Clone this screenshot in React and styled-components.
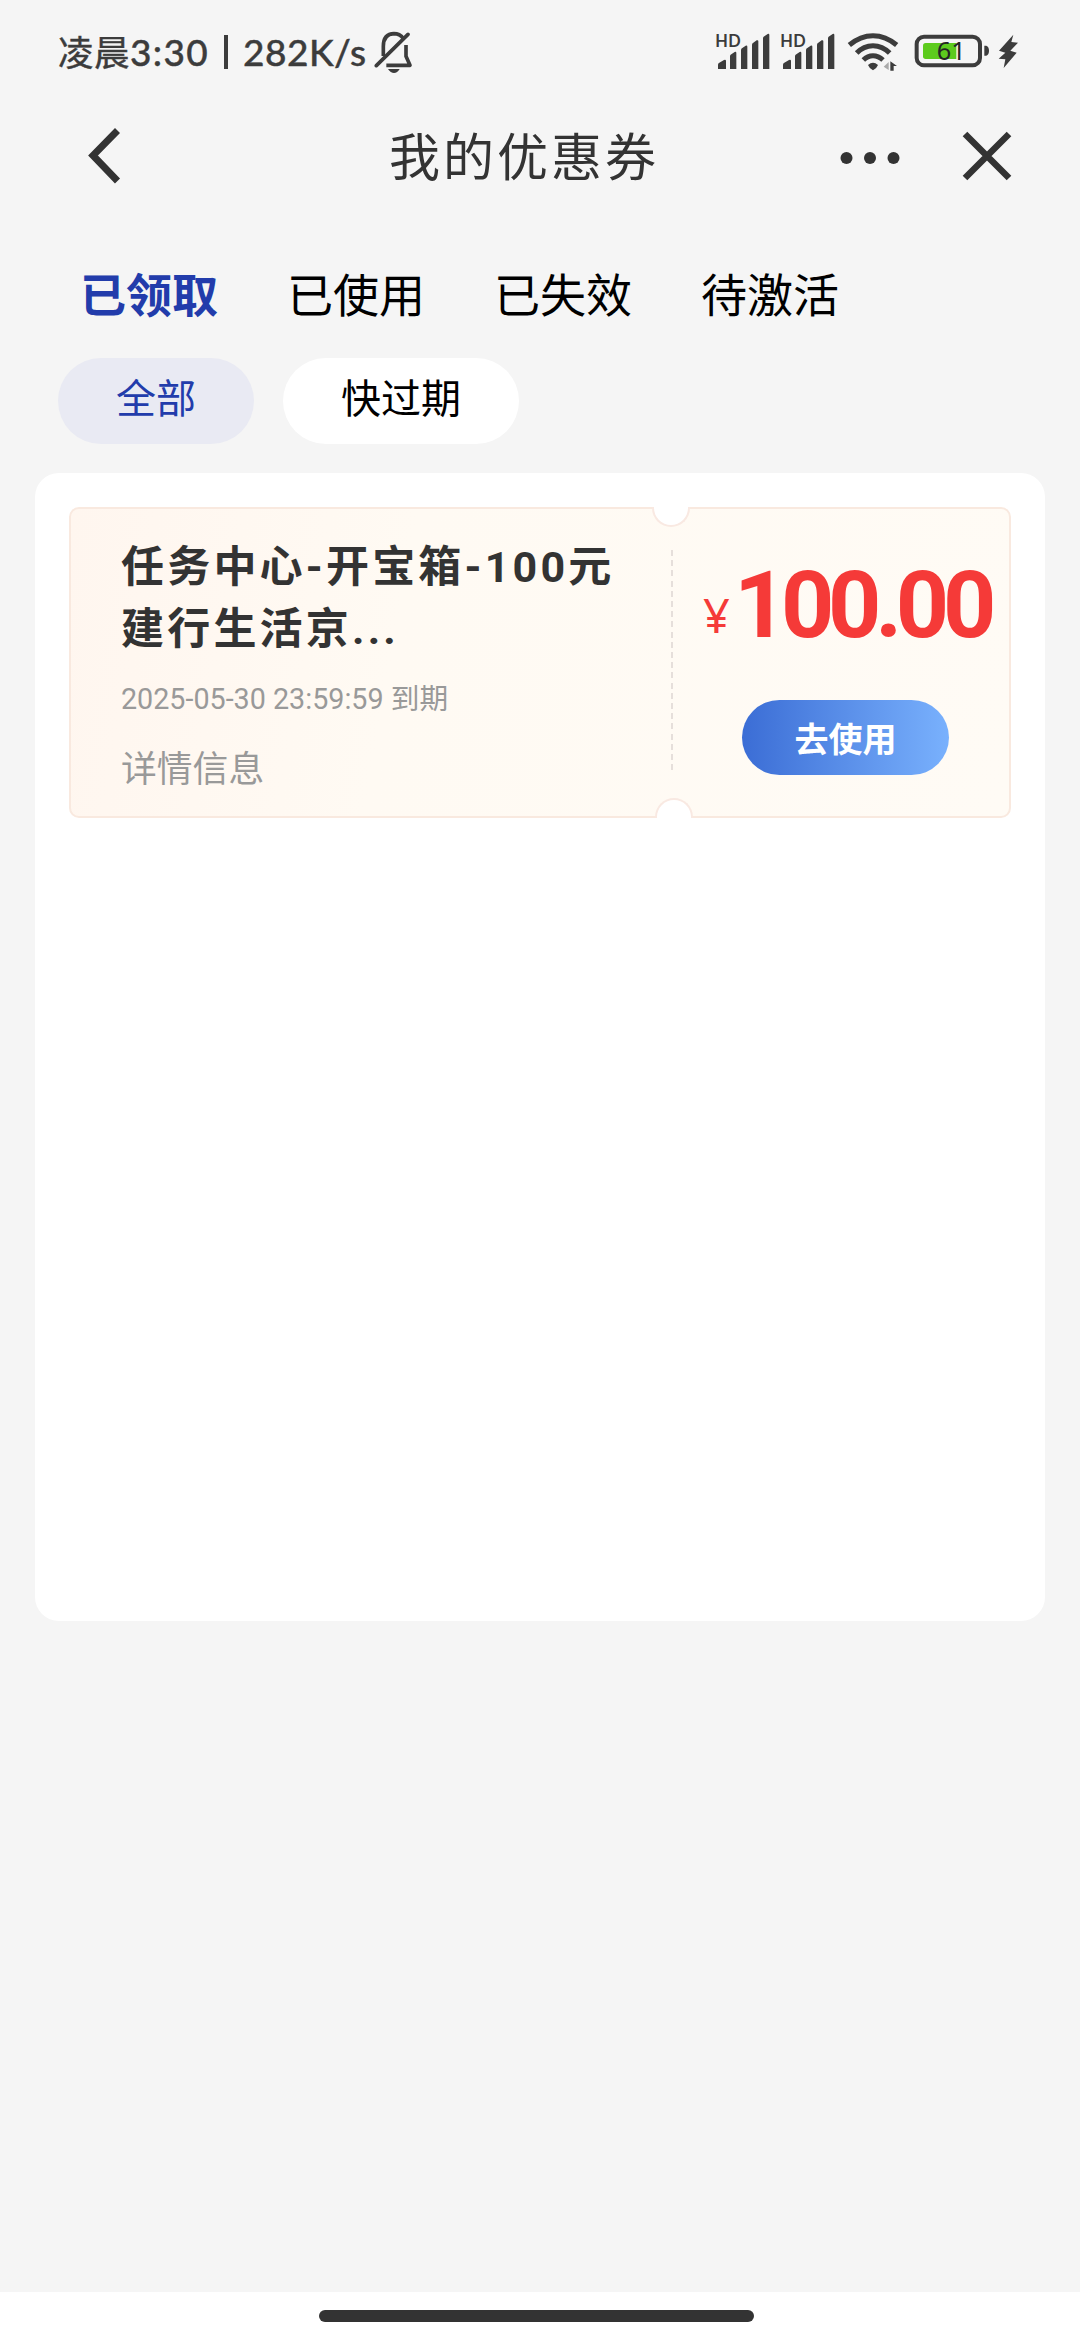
import React from "react";
import styled, { createGlobalStyle } from "styled-components";

const GlobalStyle = createGlobalStyle`
  * {
    box-sizing: border-box;
  }
  body {
    margin: 0;
    background: #f5f5f5;
    font-family: Roboto, "Noto Sans CJK SC", sans-serif;
  }
`;

const Page = styled.div`
  display: flex;
  flex-direction: column;
  width: 1080px;
  height: 2340px;
  background: #f5f5f5;
  overflow: hidden;
`;

// Status bar
const StatusBar = styled.div`
  display: flex;
  justify-content: space-between;
  height: 100px;
  padding: 0 62px 0 58px;
`;

const StatusLeft = styled.div`
  display: flex;
  height: 104px;
  color: #3c3c3c;
  font-family: Lato, "Noto Sans CJK SC", sans-serif;
  font-size: 37px;
  font-weight: 500;
  line-height: 103px;
  white-space: pre;
`;

const ClockPeriod = styled.span`
  font-size: 35.5px;
  font-weight: 400;
  letter-spacing: 0.5px;
  -webkit-text-stroke: 0.4px #3c3c3c;
`;

const ClockText = styled.span`
  width: 152px;
  letter-spacing: 1.3px;
  -webkit-text-stroke: 0.4px #3c3c3c;
`;

const Divider = styled.span`
  width: 4px;
  height: 34px;
  margin: 35px 15px 0 14px;
  background: #3c3c3c;
`;

const SpeedText = styled.span`
  width: 131px;
  letter-spacing: 0.5px;
  -webkit-text-stroke: 0.4px #3c3c3c;
`;

const BellIcon = styled.svg`
  margin-top: 31px;
`;

const StatusRight = styled.div`
  display: flex;
  padding-top: 31px;
`;

const StatusIcon = styled.svg`
  margin-right: ${(props) => props.$gap || 0}px;
  overflow: visible;
`;

// Title bar
const NavBar = styled.div`
  display: flex;
  align-items: center;
  height: 112px;
  padding: 0 66px 0 85px;
`;

const NavTitle = styled.h1`
  margin: 0 0 0 264px;
  padding-top: 5px;
  width: 450px;
  color: #333;
  font-size: 51px;
  font-weight: 400;
  letter-spacing: 3px;
  line-height: 107px;
`;

const NavIcon = styled.svg`
  flex: none;
  margin-left: ${(props) => props.$left || 0}px;
`;

// Tabs and filters
const Tabs = styled.div`
  display: flex;
  gap: 69px;
  height: 146px;
  padding: 50px 0 0 80px;
`;

const Tab = styled.span`
  color: ${(props) => (props.$active ? "#223cab" : "#000")};
  font-size: 46px;
  font-weight: ${(props) => (props.$active ? 700 : 400)};
  line-height: 68px;
`;

const Filters = styled.div`
  display: flex;
  gap: 29px;
  padding-left: 58px;
`;

const Filter = styled.span`
  height: 86px;
  padding: 0 58px;
  border-radius: 43px;
  background: ${(props) => (props.$active ? "#e9eaf3" : "#fff")};
  color: ${(props) => (props.$active ? "#223cab" : "#000")};
  font-size: 40px;
  line-height: 84px;
`;

// Coupon list
const Panel = styled.div`
  height: 1148px;
  margin: 29px 35px 0;
  padding: 34px 34px 0;
  border-radius: 24px;
  background: #fff;
`;

const Coupon = styled.div`
  position: relative;
  display: flex;
  height: 311px;
  border: 2px solid #f9e9df;
  border-radius: 10px;
  background: linear-gradient(100deg, #fff6ef 0%, #fffaf3 35%, #fffbf5 100%);
`;

const Notch = styled.i`
  position: absolute;
  left: ${(props) => (props.$bottom ? 584 : 581)}px;
  ${(props) => (props.$bottom ? "bottom: -2px;" : "top: -2px;")}
  width: 38px;
  height: 20px;
  border: 2px solid #f9e9e2;
  ${(props) => (props.$bottom ? "border-bottom: 0;" : "border-top: 0;")}
  border-radius: ${(props) => (props.$bottom ? "19px 19px 0 0" : "0 0 19px 19px")};
  background: #fff;
`;

const CouponInfo = styled.div`
  width: 600px;
  padding: 27px 0 0 50px;
`;

const CouponTitle = styled.div`
  color: #333;
  font-size: 43px;
  font-weight: 700;
  letter-spacing: 3.2px;
  line-height: 62px;
  white-space: nowrap;
`;

const Expire = styled.div`
  margin-top: 15px;
  color: #999;
  font-size: 28.7px;
  line-height: 48px;
`;

const Detail = styled.div`
  margin-top: 19px;
  color: #999;
  font-size: 35.8px;
  line-height: 56px;
`;

const Perforation = styled.div`
  width: 2px;
  height: 220px;
  margin-top: 41px;
  background: repeating-linear-gradient(#e6dfdb 0 6px, transparent 6px 10.2px);
`;

const CouponAction = styled.div`
  display: flex;
  flex-direction: column;
  padding: 47px 0 0 30px;
`;

const Price = styled.div`
  display: flex;
  align-items: baseline;
  height: 100px;
  color: #f53a38;
  line-height: 100px;
`;

const Currency = styled.span`
  position: relative;
  top: -4px;
  width: 31px;
  font-family: "Noto Sans", sans-serif;
  font-size: 47px;
`;

const Amount = styled.span`
  font-size: 93px;
  font-weight: 700;
  letter-spacing: -6.3px;
`;

const UseButton = styled.button`
  width: 207px;
  height: 75px;
  margin: 44px 0 0 39px;
  padding: 0 0 1px;
  border: 0;
  border-radius: 38px;
  background: linear-gradient(90deg, #3b6dd5, #79b1fd);
  color: #fff;
  font: 700 34px "Noto Sans CJK SC", sans-serif;
`;

// System navigation
const HomeArea = styled.div`
  height: 48px;
  margin-top: auto;
  padding: 18px 0 0 319px;
  background: #fff;
`;

const HomeIndicator = styled.div`
  width: 435px;
  height: 12px;
  border-radius: 6px;
  background: #333;
`;

const tabs = ["已领取", "已使用", "已失效", "待激活"];
const filters = ["全部", "快过期"];

const SignalIcon = ({ gap }) => (
  <StatusIcon $gap={gap} width="54" height="38" viewBox="0 0 162 114" fill="#3c3c3c">
    <text x="-2" y="47" fontFamily="Lato, sans-serif" fontWeight="700" fontSize="49" textLength="76">
      HD
    </text>
    <path d="M6 101q0-4 4-6l14-8q6-2 6 3v24H6z" />
    <path d="M42 76q0-4 4-6l10-7q5-2 5 3v48H42z" />
    <path d="M75 57q0-4 4-6l10-7q5-2 5 3v67H75z" />
    <path d="M108 41q0-4 4-6l10-7q5-2 5 3v83h-19z" />
    <path d="M141 22q0-4 4-6l10-7q5-2 5 3v102h-19z" />
  </StatusIcon>
);

const App = () => {
  return (
    <>
      <GlobalStyle />
      <Page>
        <StatusBar>
          <StatusLeft>
            <ClockText>
              <ClockPeriod>凌晨</ClockPeriod>
              3:30
            </ClockText>
            <Divider />
            <SpeedText>282K/s</SpeedText>
            <BellIcon width="40" height="44" viewBox="0 0 120 132" fill="none" stroke="#3c3c3c">
              <path
                d="M28 75V46Q28 9 60 8Q77 8 88 22M96 42V76L108 103H37"
                strokeWidth="11"
                strokeLinejoin="round"
              />
              <path d="M7 104L102 10" strokeWidth="11" strokeLinecap="round" />
              <path d="M42 114h35q-7 12-17 12t-18-12z" fill="#3c3c3c" stroke="none" />
            </BellIcon>
          </StatusLeft>
          <StatusRight>
            <SignalIcon gap={11} />
            <SignalIcon gap={13} />
            <StatusIcon $gap={17} width="50" height="42" viewBox="0 0 150 126">
              <g fill="none" stroke="#3c3c3c" strokeWidth="15">
                <path d="M4 42Q37 14 75 14T146 42" />
                <path d="M26 66Q47 44 75 44T125 66" />
                <path d="M46 87Q59 74 75 74T105 87" />
              </g>
              <path d="M60 102Q75 89 90 102Q87 111 75 118Q63 111 60 102z" fill="#3c3c3c" />
              <path d="M107 107l15-14v24z" fill="#aaa" />
              <path d="M127 119V91l20 14h-10v14z" fill="#3c3c3c" />
            </StatusIcon>
            <StatusIcon $gap={9} width="74" height="38" viewBox="0 0 222 114">
              <rect x="5" y="17" width="190" height="86" rx="22" fill="none" stroke="#3c3c3c" strokeWidth="12" />
              <path d="M32 36h92v48H32q-8 0-8-8V44q0-8 8-8z" fill="#5dcb1d" />
              <path d="M208 44h6q8 3 8 15t-8 15h-6z" fill="#3c3c3c" />
              <text x="65" y="87" fontFamily="Noto Sans, sans-serif" fontSize="76" fill="#252525">
                61
              </text>
            </StatusIcon>
            <StatusIcon width="20" height="38" viewBox="0 0 60 114" fill="#3c3c3c">
              <path d="M46 11L3 59l19 6-20 18 20 2-5 26 39-46-19-6 23-24-20-2z" />
            </StatusIcon>
          </StatusRight>
        </StatusBar>

        <NavBar>
          <NavIcon width="40" height="60" viewBox="0 0 40 60" fill="none" stroke="#333" strokeWidth="7">
            <path d="M32.5 4.500L8 29.500L32.500 55" />
          </NavIcon>
          <NavTitle>我的优惠券</NavTitle>
          <NavIcon width="64" height="20" viewBox="0 0 64 20" fill="#333">
            <circle cx="7.500" cy="12" r="6" />
            <circle cx="31" cy="12" r="6" />
            <circle cx="54.500" cy="12" r="6" />
          </NavIcon>
          <NavIcon $left={57} width="54" height="54" viewBox="0 0 54 54" stroke="#333" strokeWidth="6.500">
            <path d="M5 5L49 49M49 5L5 49" />
          </NavIcon>
        </NavBar>

        <Tabs>
          {tabs.map((label, index) => (
            <Tab key={label} $active={index === 0}>
              {label}
            </Tab>
          ))}
        </Tabs>
        <Filters>
          {filters.map((label, index) => (
            <Filter key={label} $active={index === 0}>
              {label}
            </Filter>
          ))}
        </Filters>

        <Panel>
          <Coupon>
            <Notch />
            <Notch $bottom />
            <CouponInfo>
              <CouponTitle>
                任务中心-开宝箱-100元
                <br />
                建行生活京...
              </CouponTitle>
              <Expire>2025-05-30 23:59:59 到期</Expire>
              <Detail>详情信息</Detail>
            </CouponInfo>
            <Perforation />
            <CouponAction>
              <Price>
                <Currency>¥</Currency>
                <Amount>100.00</Amount>
              </Price>
              <UseButton>去使用</UseButton>
            </CouponAction>
          </Coupon>
        </Panel>

        <HomeArea>
          <HomeIndicator />
        </HomeArea>
      </Page>
    </>
  );
};

export default App;
